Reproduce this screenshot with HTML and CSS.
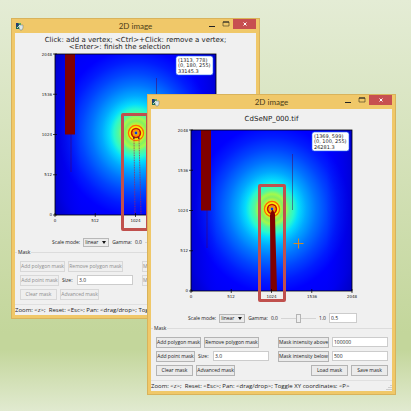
FILE: index.html
```
<!DOCTYPE html>
<html lang="en">
<head>
<meta charset="utf-8">
<title>2D image</title>
<link rel="stylesheet" href="styles.css">
</head>
<body>
<svg class="defs" width="0" height="0" aria-hidden="true">
  <defs>
    <linearGradient id="edge" x1="0" y1="0" x2="1" y2="0">
      <stop offset="0" stop-color="#0000b4" stop-opacity=".5"/>
      <stop offset=".16" stop-color="#0000e0" stop-opacity="0"/>
      <stop offset=".84" stop-color="#0000e0" stop-opacity="0"/>
      <stop offset="1" stop-color="#0000b4" stop-opacity=".5"/>
    </linearGradient>
    <radialGradient id="halo" gradientUnits="userSpaceOnUse" cx="0" cy="0" r="120" gradientTransform="translate(81 79) scale(.92 1)">
      <stop offset="0" stop-color="#d8ff20"/>
      <stop offset=".07" stop-color="#c8f030"/>
      <stop offset=".1" stop-color="#84f060"/>
      <stop offset=".125" stop-color="#a4f84c"/>
      <stop offset=".155" stop-color="#58f898"/>
      <stop offset=".2" stop-color="#28f8d0"/>
      <stop offset=".24" stop-color="#04dcfc"/>
      <stop offset=".31" stop-color="#00a8ff"/>
      <stop offset=".4" stop-color="#0074ff"/>
      <stop offset=".5" stop-color="#0044ff"/>
      <stop offset=".6" stop-color="#001cff"/>
      <stop offset=".7" stop-color="#0000ff"/>
      <stop offset=".86" stop-color="#0000f6"/>
      <stop offset="1" stop-color="#0000d2"/>
    </radialGradient>
    <g id="heatmap">
      <rect width="161" height="161" fill="url(#halo)"/>
      <rect width="161" height="161" fill="url(#edge)"/>
      <g fill="none">
        <circle cx="81" cy="79" r="7.5" stroke="#ff6a00" stroke-width="1.4"/>
        <circle cx="81" cy="79" r="6" stroke="#ffe600" stroke-width="1.4"/>
        <circle cx="81" cy="79" r="4.3" stroke="#c81000" stroke-width="1.8"/>
        <circle cx="81" cy="79" r="2.6" stroke="#ff9000" stroke-width="1.6"/>
      </g>
      <circle cx="81" cy="79" r="1.4" fill="#1030e0"/>
      <rect x="10" width="10" height="80.500" fill="#800000"/>
      <path d="M16 80v38M101.500 24v56" stroke="#500050" stroke-width=".7" opacity=".7"/>
    </g>
    <g id="axes">
      <rect width="161" height="161" fill="none" stroke="#000" stroke-width=".8"/>
      <path d="M-2 0h4M-2 40.250h4M-2 80.500h4M-2 120.750h4M-2 161h4M0 159v4M40.250 159v4M80.500 159v4M120.750 159v4M161 159v4" stroke="#000" stroke-width=".7"/>
      <g class="tick tick-y">
        <text x="-3" y="1.500">2048</text><text x="-3" y="42">1536</text><text x="-3" y="82">1024</text><text x="-3" y="122">512</text><text x="-3" y="162">0</text>
      </g>
      <g class="tick tick-x">
        <text x="0" y="168">0</text><text x="40" y="168">512</text><text x="80.500" y="168">1024</text><text x="121" y="168">1536</text><text x="161" y="168">2048</text>
      </g>
    </g>
    <g id="appicon">
      <path d="M0 0h5v6h-5z" fill="#1c6b4c"/>
      <path d="M0 0h3l-1 3-2 1z" fill="#243c78"/>
      <path d="M2 0h3v3z" fill="#5cae60"/>
      <path d="M3 2h4v3l-1 2h-2l-1-2z" fill="#dfe8e8" stroke="#6b7c7c" stroke-width=".5"/>
      <path d="M1 5l3-3" stroke="#fff" stroke-width=".7"/>
    </g>
  </defs>
</svg>

<main class="desktop">
  <section class="window window-back" aria-label="Mask selection">
    <header class="titlebar">
      <svg class="app-icon" viewBox="0 0 8 8" aria-hidden="true"><use href="#appicon"/></svg>
      <h2>2D image</h2>
      <div class="controls">
        <button class="ctl" aria-label="Minimize"><svg viewBox="0 0 8 8"><path d="M1 6.500h6" stroke="#222" stroke-width="1"/></svg></button>
        <button class="ctl" aria-label="Maximize"><svg viewBox="0 0 8 8"><path d="M1 2h6v4h-6z" fill="none" stroke="#3a3420" stroke-width=".6"/><path d="M1 2h6" stroke="#222"/></svg></button>
        <button class="ctl close" aria-label="Close"><svg viewBox="0 0 8 8"><path d="M2.500 2.500l3 3M5.500 2.500l-3 3" stroke="#fff"/></svg></button>
      </div>
    </header>
    <div class="client">
      <p class="caption">Click: add a vertex; &lt;Ctrl&gt;+Click: remove a vertex;<br><span class="second">&lt;Enter&gt;: finish the selection</span></p>
      <svg class="plot" viewBox="-40 0 241 170" role="img" aria-label="Detector image with mask vertices">
        <use href="#heatmap"/>
        <path d="M79 84l1 76M84 84l2 76" stroke="#b02050" stroke-width=".8" stroke-dasharray="1 .7"/>
        <path d="M78 84h1.500M83 84h1.500" stroke="#302030" stroke-width="1.500"/>
        <use href="#axes"/>
        <rect x="121" y="2" width="37" height="19" rx="2.500" fill="#fff" stroke="#2a6cf0" stroke-width=".6"/>
        <g class="readout"><text x="123" y="7.500">(1313, 778)</text><text x="123" y="13">(0, 180, 255)</text><text x="123" y="18.500">33145.3</text></g>
      </svg>
      <div class="scale">
        <label for="mode1">Scale mode:</label>
        <span class="combo"><select id="mode1"><option>linear</option></select></span>
        <label for="gamma1">Gamma:</label>
        <span>0.0</span>
        <input id="gamma1" type="range" min="0" max="1" step="0.1" value="0.5">
        <span>1.0</span>
        <input class="gamma" type="text" value="0.5" aria-label="Gamma value">
      </div>
      <fieldset class="mask">
        <legend>Mask</legend>
        <div class="row">
          <button class="w45" disabled>Add polygon mask</button>
          <button class="w55" disabled>Remove polygon mask</button>
          <button class="w51 push" disabled>Mask intensity above</button>
          <input type="text" value="100000" aria-label="Upper intensity">
        </div>
        <div class="row">
          <button class="w39" disabled>Add point mask</button>
          <label class="size" for="size1">Size:</label>
          <input id="size1" type="text" value="3.0">
          <button class="w51 push" disabled>Mask intensity below</button>
          <input type="text" value="500" aria-label="Lower intensity">
        </div>
        <div class="row">
          <button class="w37" disabled>Clear mask</button>
          <button class="w39" disabled>Advanced mask</button>
          <button class="w37 push" disabled>Load mask</button>
          <button class="w37" disabled>Save mask</button>
        </div>
      </fieldset>
      <footer class="status">Zoom: &lt;z&gt;;&nbsp; Reset: &lt;Esc&gt;; Pan: &lt;drag/drop&gt;; Toggle XY coordinates: &lt;P&gt;</footer>
    </div>
    <div class="marker" aria-hidden="true"></div>
  </section>

  <section class="window window-front" aria-label="Masked image">
    <header class="titlebar">
      <svg class="app-icon" viewBox="0 0 8 8" aria-hidden="true"><use href="#appicon"/></svg>
      <h2>2D image</h2>
      <div class="controls">
        <button class="ctl" aria-label="Minimize"><svg viewBox="0 0 8 8"><path d="M1 6.500h6" stroke="#222" stroke-width="1"/></svg></button>
        <button class="ctl" aria-label="Maximize"><svg viewBox="0 0 8 8"><path d="M1 2h6v4h-6z" fill="none" stroke="#3a3420" stroke-width=".6"/><path d="M1 2h6" stroke="#222"/></svg></button>
        <button class="ctl close" aria-label="Close"><svg viewBox="0 0 8 8"><path d="M2.500 2.500l3 3M5.500 2.500l-3 3" stroke="#fff"/></svg></button>
      </div>
    </header>
    <div class="client">
      <p class="caption">CdSeNP_000.tif</p>
      <svg class="plot" viewBox="-40 0 241 170" role="img" aria-label="Detector image CdSeNP_000.tif with masked beam stop">
        <use href="#heatmap"/>
        <path d="M81 80h1l2 4 .5 22 1.500 55h-6.500l-.5-76z" fill="#800000"/>
        <path d="M102.500 113.500h10M107.500 108.500v10" stroke="#d08a28" stroke-width="1"/>
        <use href="#axes"/>
        <rect x="121" y="2" width="37" height="19" rx="2.500" fill="#fff" stroke="#2a6cf0" stroke-width=".6"/>
        <g class="readout"><text x="123" y="7.500">(1369, 599)</text><text x="123" y="13">(0, 100, 255)</text><text x="123" y="18.500">26281.3</text></g>
      </svg>
      <div class="scale">
        <label for="mode2">Scale mode:</label>
        <span class="combo"><select id="mode2"><option>linear</option></select></span>
        <label for="gamma2">Gamma:</label>
        <span>0.0</span>
        <input id="gamma2" type="range" min="0" max="1" step="0.1" value="0.5">
        <span>1.0</span>
        <input class="gamma" type="text" value="0.5" aria-label="Gamma value">
      </div>
      <fieldset class="mask">
        <legend>Mask</legend>
        <div class="row">
          <button class="w45">Add polygon mask</button>
          <button class="w55">Remove polygon mask</button>
          <button class="w51 push">Mask intensity above</button>
          <input type="text" value="100000" aria-label="Upper intensity">
        </div>
        <div class="row">
          <button class="w39">Add point mask</button>
          <label class="size" for="size2">Size:</label>
          <input id="size2" type="text" value="3.0">
          <button class="w51 push">Mask intensity below</button>
          <input type="text" value="500" aria-label="Lower intensity">
        </div>
        <div class="row">
          <button class="w37">Clear mask</button>
          <button class="w39">Advanced mask</button>
          <button class="w37 push">Load mask</button>
          <button class="w37">Save mask</button>
        </div>
      </fieldset>
      <footer class="status">Zoom: &lt;z&gt;;&nbsp; Reset: &lt;Esc&gt;; Pan: &lt;drag/drop&gt;; Toggle XY coordinates: &lt;P&gt;
        <svg class="grip" viewBox="0 0 6 6" aria-hidden="true"><path d="M5 0v1M3 2v1M5 2v1M1 4v1M3 4v1M5 4v1" stroke="#aaa"/></svg>
      </footer>
    </div>
    <div class="marker" aria-hidden="true"></div>
  </section>
</main>
</body>
</html>
```
FILE: styles.css
```
* {
  box-sizing: border-box;
}

body {
  margin: 0;
  min-height: 100vh;
  font: 5px/8px "Open Sans", "Noto Sans", sans-serif;
  color: #222;
  background: linear-gradient(#e4ecd5, #c3d69b 81%, #c3d69b 85%, #e1ead0);
}

.defs {
  position: absolute;
}

.desktop {
  position: relative;
  min-height: 100vh;
  overflow: hidden;
}

.window {
  position: absolute;
  width: 249px;
  padding: 0 3px 3px;
  border: 1px solid #d9b35b;
  background: #f0c869;
}

.window-back {
  left: 11px;
  top: 18px;
}

.window-front {
  left: 147px;
  top: 94px;
}

.titlebar {
  display: grid;
  grid-template-columns: 1fr auto 1fr;
  height: 14px;
}

.titlebar h2 {
  margin: 0;
  font: 8px/14px Lato, "Open Sans", sans-serif;
  color: #4a3c18;
}

.app-icon {
  width: 8px;
  height: 8px;
  margin: 4px 1px;
}

.controls {
  display: flex;
  justify-content: flex-end;
}

.ctl {
  display: flex;
  justify-content: center;
  width: 14px;
  height: 10px;
  padding: 1px;
  border: 0;
  background: none;
}

.ctl svg {
  width: 8px;
  height: 8px;
}

.close {
  width: 23px;
  background: #c75050;
}

.client {
  background: #f0f0f0;
}

.caption {
  display: flow-root;
  height: 21px;
  margin: 0;
  padding-top: 4px;
  font: 7px/7px "DejaVu Sans", sans-serif;
  text-align: center;
}

.window-front .caption {
  padding-top: 7px;
}

.second {
  padding-right: 32px;
}

.plot {
  display: block;
  width: 100%;
  overflow: visible;
}

.tick,
.readout {
  font-family: "DejaVu Sans", sans-serif;
  fill: #222;
}

.tick {
  font-size: 4px;
}

.tick-y {
  text-anchor: end;
}

.tick-x {
  text-anchor: middle;
}

.readout {
  font-size: 5px;
}

.scale {
  display: flex;
  align-items: center;
  justify-content: center;
  gap: 3px;
  height: 10px;
  margin-top: 13px;
  padding-left: 2px;
}

button,
select,
input {
  margin: 0;
  font: inherit;
  color: inherit;
}

.combo {
  position: relative;
  display: flex;
}

.combo::after {
  content: "";
  position: absolute;
  right: 3px;
  top: 3px;
  border: 2px solid transparent;
  border-top: 3px solid #111;
  border-bottom: 0;
  pointer-events: none;
}

select {
  width: 26px;
  height: 9px;
  padding: 0 1px;
  border: 1px solid #b8b8b8;
  border-radius: 0;
  appearance: none;
  background: #ebebeb;
  line-height: 7px;
}

input[type="text"] {
  width: 56px;
  height: 10px;
  padding: 0 1px;
  border: 1px solid #ccc;
  background: #fff;
}

input.gamma {
  width: 28px;
}

input[type="range"] {
  width: 35px;
  height: 10px;
  appearance: none;
  background: linear-gradient(#d4d4d4, #d4d4d4) center / 100% 1px no-repeat;
}

input[type="range"]::-webkit-slider-thumb {
  appearance: none;
  width: 5px;
  height: 9px;
  border: 1px solid #b4b4b4;
  background: #eee;
}

.mask {
  display: grid;
  gap: 4px;
  min-width: 0;
  margin: 1px 0 5px;
  padding: 5px 4px 0 5px;
  border: 0;
  border-top: 1px solid #dcdcdc;
}

.mask legend {
  margin-left: -3px;
  padding: 0 1px;
}

.row {
  display: flex;
  align-items: center;
  gap: 3px;
  height: 10px;
}

.row button {
  height: 11px;
  padding: 0;
  border: 1px solid #b4b4b4;
  background: #ebebeb;
  line-height: 8px;
  white-space: nowrap;
}

.row button:disabled {
  border-color: #d8d8d8;
  background: #efefef;
  color: #8c8c8c;
}

.row .push {
  margin-left: auto;
}

.size {
  width: 12px;
}

.w37 { width: 37px; }
.w39 { width: 39px; }
.w45 { width: 45px; }
.w51 { width: 51px; }
.w55 { width: 55px; }

.status {
  position: relative;
  border-top: 1px solid #e0e0e0;
  font-size: 6px;
  line-height: 10px;
  white-space: nowrap;
}

.grip {
  position: absolute;
  right: 0;
  bottom: 0;
  width: 6px;
  height: 6px;
}

.marker {
  position: absolute;
  left: 109px;
  top: 94px;
  width: 28px;
  height: 118px;
  border: 3px solid #c0504d;
  border-radius: 2px;
}

.window-front .marker {
  left: 110px;
  top: 89px;
}
```
